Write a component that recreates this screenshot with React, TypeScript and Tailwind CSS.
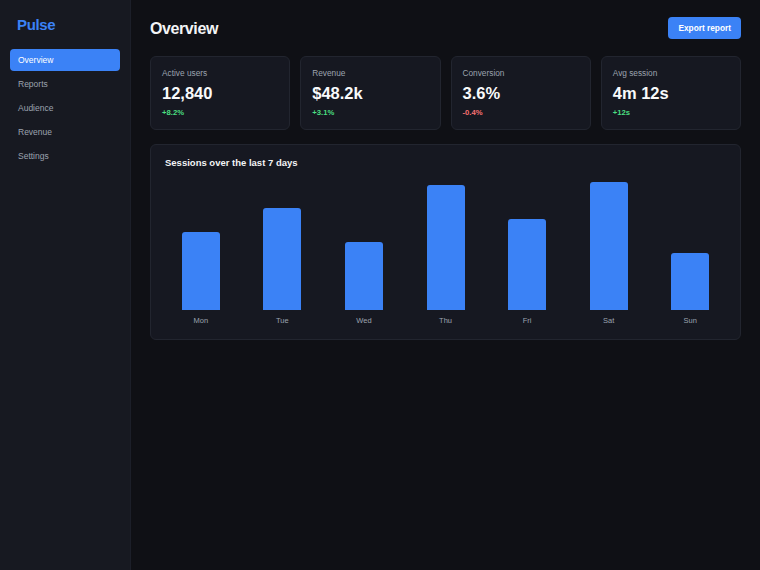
const font = { fontFamily: '"Liberation Sans", Arial, sans-serif' };

const navItems = ["Overview", "Reports", "Audience", "Revenue", "Settings"];

const stats = [
  { label: "Active users", value: "12,840", delta: "+8.2%", up: true },
  { label: "Revenue", value: "$48.2k", delta: "+3.1%", up: true },
  { label: "Conversion", value: "3.6%", delta: "-0.4%", up: false },
  { label: "Avg session", value: "4m 12s", delta: "+12s", up: true },
];

// bar heights in px for the 140px chart area
const sessions = [
  { day: "Mon", value: 78 },
  { day: "Tue", value: 102 },
  { day: "Wed", value: 68 },
  { day: "Thu", value: 125 },
  { day: "Fri", value: 91 },
  { day: "Sat", value: 128 },
  { day: "Sun", value: 57 },
];

export default function App() {
  return (
    <div className="flex h-[570px] w-[760px] bg-[#0f1015] text-white" style={font}>
      <aside className="w-[131px] shrink-0 border-r border-[#1c1f29] bg-[#171921] px-[10px] pt-[15px]">
        <div className="px-[7px] text-[15px] font-bold leading-[20px] tracking-tight text-[#3b82f6]">
          Pulse
        </div>
        <nav className="mt-[14px] flex flex-col gap-[2px]">
          {navItems.map((item, i) => (
            <div
              key={item}
              className={
                i === 0
                  ? "rounded-[4px] bg-[#3b82f6] px-[8px] py-[5px] text-[8.5px] font-medium leading-[12px] text-white"
                  : "rounded-[4px] px-[8px] py-[5px] text-[8.5px] leading-[12px] text-[#9ca3af]"
              }
            >
              {item}
            </div>
          ))}
        </nav>
      </aside>

      <main className="flex-1 px-[19px] pt-[17px]">
        <div className="flex items-center justify-between">
          <h1 className="pt-[1px] text-[16px] font-bold leading-[21px] tracking-tight text-[#f3f4f6]">
            Overview
          </h1>
          <button className="h-[22px] rounded-[4px] bg-[#3b82f6] px-[10px] text-[8.3px] font-semibold text-white">
            Export report
          </button>
        </div>

        <div className="mt-[17px] grid grid-cols-4 gap-[10px]">
          {stats.map((s) => (
            <div
              key={s.label}
              className="h-[74px] rounded-[6px] border border-[#22252f] bg-[#161821] px-[11px] pt-[10px]"
            >
              <div className="text-[8.3px] leading-[12px] text-[#9ca3af]">{s.label}</div>
              <div className="mt-[4px] text-[16.5px] font-bold leading-[20px] text-[#f9fafb]">
                {s.value}
              </div>
              <div
                className={
                  s.up
                    ? "mt-[4px] text-[7.7px] font-semibold leading-[11px] text-[#4ade80]"
                    : "mt-[4px] text-[7.7px] font-semibold leading-[11px] text-[#f87171]"
                }
              >
                {s.delta}
              </div>
            </div>
          ))}
        </div>

        <div className="mt-[14px] rounded-[6px] border border-[#22252f] bg-[#161821] px-[14px] pb-[13px] pt-[12px]">
          <h2 className="text-[9.5px] font-bold leading-[12px] text-[#f3f4f6]">
            Sessions over the last 7 days
          </h2>
          <div className="mt-[1px] flex gap-[10px]">
            {sessions.map((d) => (
              <div key={d.day} className="flex flex-1 flex-col items-center">
                <div className="flex h-[140px] w-full items-end justify-center">
                  <div
                    className="w-[38px] rounded-t-[3px] bg-[#3b82f6]"
                    style={{ height: d.value }}
                  />
                </div>
                <div className="mt-[6px] text-[7.5px] leading-[10px] text-[#9ca3af]">{d.day}</div>
              </div>
            ))}
          </div>
        </div>
      </main>
    </div>
  );
}
